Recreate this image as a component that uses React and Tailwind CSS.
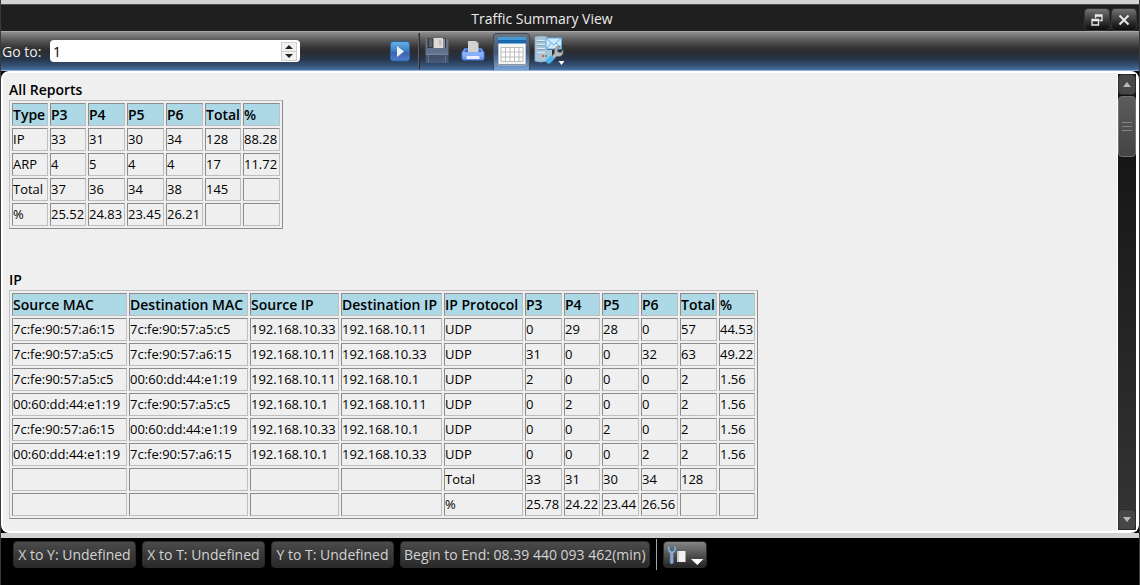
const BORDER = 'border border-t-[#8c8c8c] border-l-[#8c8c8c] border-b-[#bebebe] border-r-[#bebebe]';

const summary = {
  title: 'All Reports',
  widths: ['w-[36px]', 'w-[36px]', 'w-[37px]', 'w-[37px]', 'w-[37px]', 'w-[36px]', 'w-[37px]'],
  head: ['Type', 'P3', 'P4', 'P5', 'P6', 'Total', '%'],
  rows: [
    ['IP', '33', '31', '30', '34', '128', '88.28'],
    ['ARP', '4', '5', '4', '4', '17', '11.72'],
    ['Total', '37', '36', '34', '38', '145', ''],
    ['%', '25.52', '24.83', '23.45', '26.21', '', ''],
  ],
};

const ip = {
  title: 'IP',
  widths: [
    'w-[115px]', 'w-[119px]', 'w-[89px]', 'w-[101px]', 'w-[79px]', 'w-[37px]',
    'w-[36px]', 'w-[37px]', 'w-[37px]', 'w-[37px]', 'w-[36px]',
  ],
  head: ['Source MAC', 'Destination MAC', 'Source IP', 'Destination IP', 'IP Protocol', 'P3', 'P4', 'P5', 'P6', 'Total', '%'],
  rows: [
    ['7c:fe:90:57:a6:15', '7c:fe:90:57:a5:c5', '192.168.10.33', '192.168.10.11', 'UDP', '0', '29', '28', '0', '57', '44.53'],
    ['7c:fe:90:57:a5:c5', '7c:fe:90:57:a6:15', '192.168.10.11', '192.168.10.33', 'UDP', '31', '0', '0', '32', '63', '49.22'],
    ['7c:fe:90:57:a5:c5', '00:60:dd:44:e1:19', '192.168.10.11', '192.168.10.1', 'UDP', '2', '0', '0', '0', '2', '1.56'],
    ['00:60:dd:44:e1:19', '7c:fe:90:57:a5:c5', '192.168.10.1', '192.168.10.11', 'UDP', '0', '2', '0', '0', '2', '1.56'],
    ['7c:fe:90:57:a6:15', '00:60:dd:44:e1:19', '192.168.10.33', '192.168.10.1', 'UDP', '0', '0', '2', '0', '2', '1.56'],
    ['00:60:dd:44:e1:19', '7c:fe:90:57:a6:15', '192.168.10.1', '192.168.10.33', 'UDP', '0', '0', '0', '2', '2', '1.56'],
    ['', '', '', '', 'Total', '33', '31', '30', '34', '128', ''],
    ['', '', '', '', '%', '25.78', '24.22', '23.44', '26.56', '', ''],
  ],
};

function Report({ data }) {
  return (
    <section>
      <h2 className="h-[20px] leading-[20px] font-semibold">{data.title}</h2>
      <table
        aria-label={data.title}
        className="table-fixed w-min border-separate border-spacing-[2px] border border-t-[#bebebe] border-l-[#bebebe] border-b-[#8c8c8c] border-r-[#8c8c8c]"
      >
        <colgroup>
          {data.widths.map((w, i) => <col key={i} className={w} />)}
        </colgroup>
        <thead>
          <tr>
            {data.head.map((h) => (
              <th key={h} scope="col" className={`h-[23px] p-0 text-left leading-[21px] font-semibold whitespace-nowrap bg-[#add8e6] ${BORDER}`}>{h}</th>
            ))}
          </tr>
        </thead>
        <tbody className="text-[13px]">
          {data.rows.map((r, i) => (
            <tr key={i}>
              {r.map((c, j) => (
                <td key={j} className={`h-[23px] p-0 leading-[21px] whitespace-nowrap ${BORDER}`}>{c}</td>
              ))}
            </tr>
          ))}
        </tbody>
      </table>
    </section>
  );
}

function PlayIcon() {
  return (
    <svg width="20" height="21" viewBox="0 0 20 21">
      <defs>
        <linearGradient id="play" x1="0" y1="0" x2="0" y2="1">
          <stop offset="0" stopColor="#67b3e4" /><stop offset=".5" stopColor="#3d7cc4" /><stop offset=".55" stopColor="#3a62b0" /><stop offset="1" stopColor="#4f7fc9" />
        </linearGradient>
      </defs>
      <rect x=".5" y=".5" width="19" height="19.500" rx="2.500" fill="url(#play)" stroke="#315f9f" />
      <path d="M7 5 L14 10.500 L7 16z" fill="#eef0f6" />
    </svg>
  );
}

function SaveIcon() {
  return (
    <svg width="24" height="26" viewBox="0 0 24 26">
      <defs>
        <linearGradient id="disk" x1="0" y1="0" x2="0" y2="1">
          <stop offset="0" stopColor="#68768d" /><stop offset=".5" stopColor="#5d6f8c" /><stop offset=".62" stopColor="#66778f" /><stop offset=".68" stopColor="#3f4e68" /><stop offset="1" stopColor="#4a5b78" />
        </linearGradient>
      </defs>
      <path d="M.500 1h22l1 1v22q0 1-1 1H1.500q-1 0-1-1z" fill="url(#disk)" />
      <path d="M2.500 .500h18.500v9.500H2.500z" fill="#35383d" />
      <path d="M4 1h3.500v8H4z" fill="#5b5e63" />
      <path d="M8.500 0h9.500v10h-9.500z" fill="#dedbd8" />
      <path d="M14 1.500h2.500v6H14z" fill="#c4c1bf" />
      <path d="M18 1h2v9h-2z" fill="#8e9094" />
      <path d="M3.500 17v8M20.500 17v8" stroke="#66778f" strokeWidth=".8" />
      <path d="M1 16.500h22" stroke="#7c8ca3" strokeWidth=".8" />
    </svg>
  );
}

function PrintIcon() {
  return (
    <svg width="24" height="20" viewBox="0 0 24 20">
      <defs>
        <linearGradient id="printer" x1="0" y1="0" x2="0" y2="1">
          <stop offset="0" stopColor="#6d9cf4" /><stop offset=".5" stopColor="#8eb5fd" /><stop offset="1" stopColor="#5c8af0" />
        </linearGradient>
      </defs>
      <path d="M4 7.500h16q1 0 1.500 2 1.500.500 1.500 2.500v5q0 2-2 2H3q-2 0-2-2v-5q0-2 1.500-2.500.5-2 1.500-2z" fill="url(#printer)" stroke="#5c88e6" strokeWidth=".8" />
      <path d="M4.500 8.500h15l1 2.500h-17z" fill="#3c64ba" />
      <path d="M7 0h8l2.500 2v9H7z" fill="#d2d2d0" />
      <path d="M15 0v2h2.500z" fill="#a2a4a6" />
      <path d="M5.500 15h13v3h-13z" fill="#e8effd" />
    </svg>
  );
}

function TableIcon() {
  return (
    <svg width="28" height="29" viewBox="0 0 28 29">
      <rect x=".5" y=".5" width="27" height="27.500" rx="1" fill="#f4f5f6" stroke="#b8c4d2" />
      <path d="M0 .500h28v6H0z" fill="#1766b0" />
      <path d="M0 .500h28v2.500H0z" fill="#3f9ad8" />
      <path d="M3 10.500h22v14H3z" fill="#fff" stroke="#bcbcbc" />
      <path d="M7.500 10v15M12 10v15M16.500 10v15M21 10v15M3 15h22M3 20h22" stroke="#bcbcbc" />
      <path d="M1 27.500h26" stroke="#8b96a3" />
    </svg>
  );
}

function ReportToolsIcon() {
  return (
    <svg width="32" height="31" viewBox="0 0 32 31">
      <path d="M1 1q6-2 12 0v24q-6 2-12 0z" fill="#a9c5d9" stroke="#8fb0c8" strokeWidth=".8" />
      <path d="M3 4.500h8M3 8.500h8M3 12.500h8M3 16.500h8" stroke="#dcebf4" />
      <path d="M3 5.500h8M3 9.500h8M3 13.500h8" stroke="#7896ad" strokeWidth=".7" />
      <path d="M13 14h5v11l-5 1z" fill="#a9c5d9" />
      <path d="M8 19h2v2H8z" fill="#e0593e" />
      <path d="M11 19h2v2h-2z" fill="#55a861" />
      <path d="M12 2h15.500v11H12z" fill="#cfe9f8" stroke="#62aee0" />
      <path d="M12 2l7.700 7L27.500 2M12 13l5.500-6M27.500 13L22 7" fill="none" stroke="#69b0de" />
      <path d="M17.500 20.500l3-3.500q-1-4.500 3-6.500l3-.5-3 3.500.5 2.500 3 .5 2-3q1 5.500-3 7h-3.500l-2.500 2.500z" fill="#b4b8bc" stroke="#5e6265" strokeWidth=".7" />
      <path d="M13 24.500l4-4 2.500 2-4 4q-2.500.5-2.500-2z" fill="#4fb3ec" stroke="#4fb3ec" strokeWidth="2" strokeLinejoin="round" />
      <path d="M24.500 25h6l-3 4z" fill="#fff" />
    </svg>
  );
}

function WrenchMenuIcon() {
  return (
    <svg width="38" height="24" viewBox="0 0 38 24">
      <rect x="11" y="8" width="8.500" height="11" fill="#f2f2f2" />
      <path d="M11 8h2v11h-2z" fill="#c8c8c8" />
      <path d="M1.500 3q-1 5 2.500 7.500V20q1.700 2 3.500 0V10.500Q11.500 8 10 3L8 2.500v4.500L6 8.200 4 7V2.500z" fill="#8eabcd" stroke="#4e6684" strokeWidth=".7" />
      <path d="M25 16h12.500l-6.250 6z" fill="#fff" />
    </svg>
  );
}

const windowButton =
  'flex h-[23px] w-[26px] items-center justify-center rounded border border-[#333] bg-linear-to-b from-[#747474] via-[#3c3c3c] to-[#0b0b0b]';
const statusButton =
  'h-[27px] min-w-[123px] rounded border border-[#2b2b2b] bg-linear-to-b from-[#4b4b4b] to-[#292929] px-[3px] whitespace-nowrap text-[#d2d2d2]';

export default function App() {
  return (
    <div className="flex min-h-screen flex-col bg-black border-x border-[#3a3a3a] font-['Open_Sans','Noto_Sans',sans-serif] text-[14px] text-black">
      <div className="h-[5px] shrink-0 border-b border-[#505050] bg-[#d2d2d2]" />

      <header className="flex h-[26px] shrink-0 items-end gap-px bg-[#1f1f1f] pr-[2px]">
        <h1 className="h-[26px] flex-1 text-center leading-[27px] text-[#ececec]">Traffic Summary View</h1>
        <button type="button" aria-label="Restore" className={windowButton}>
          <svg width="12" height="12" viewBox="0 0 12 12" fill="none" stroke="#e8e8e8">
            <path d="M4.500 4V1h6.500v5.500H8.500M4.500 2h6.500" strokeWidth="1.300" />
            <path d="M1 5.500h6.500V11H1zM1 6.500h6.500" strokeWidth="1.300" />
          </svg>
        </button>
        <button type="button" aria-label="Close" className={windowButton}>
          <svg width="12" height="12" viewBox="0 0 12 12" stroke="#e8e8e8" strokeWidth="2"><path d="M1.500 1.500l9 9M10.500 1.500l-9 9" /></svg>
        </button>
      </header>

      <div className="flex h-[40px] shrink-0 items-center border-t border-b border-t-[#a8a8a8] border-b-[#8fb0da] bg-[linear-gradient(to_bottom,#8f8f8f_0%,#5c5c5c_20%,#3a3a3a_38%,#2b2c2e_50%,#26364c_72%,#38557c_90%,#4a70a3_100%)] pl-px">
        <label htmlFor="goto" className="w-[48px] whitespace-nowrap text-[#ededed]">Go to:</label>
        <div className="flex h-[22px] w-[250px] items-center rounded-sm bg-white pr-[3px]">
          <input id="goto" type="text" inputMode="numeric" defaultValue="1" className="h-full min-w-0 flex-1 bg-transparent pl-[3px] outline-none" />
          <div className="flex h-[19px] w-[16px] flex-col border border-[#cfcfcf] bg-[#f2f2f2]">
            <button type="button" aria-label="Increase" className="flex flex-1 items-center justify-center border-b border-[#cfcfcf]">
              <svg width="8" height="4" viewBox="0 0 8 4"><path d="M0 4l4-4 4 4z" fill="#222" /></svg>
            </button>
            <button type="button" aria-label="Decrease" className="flex flex-1 items-center justify-center">
              <svg width="8" height="4" viewBox="0 0 8 4"><path d="M0 0l4 4 4-4z" fill="#222" /></svg>
            </button>
          </div>
        </div>
        <button type="button" aria-label="Go" className="ml-[90px]"><PlayIcon /></button>
        <div className="ml-[8px] h-[36px] w-[2px] border-l border-[#5f5f5f] bg-[#25282c]" />
        <button type="button" aria-label="Save" className="ml-[5px]"><SaveIcon /></button>
        <button type="button" aria-label="Print" className="ml-[12px]"><PrintIcon /></button>
        <button type="button" aria-label="Table view" aria-pressed="true" className="ml-[8px] flex h-[37px] w-[37px] items-center justify-center rounded-t border border-b-0 border-[#45484c] bg-linear-to-b from-[#6b7582] via-[#3f5878] to-[#7ba2d6]">
          <TableIcon />
        </button>
        <button type="button" aria-label="Report settings" className="ml-[4px]"><ReportToolsIcon /></button>
      </div>

      <main className="flex flex-1 rounded-lg border-2 border-white bg-[#efefef]">
        <div className="flex min-w-0 flex-1 flex-col gap-[41px] overflow-hidden pt-[7px] pb-[12px] pl-[6px]">
          <Report data={summary} />
          <Report data={ip} />
        </div>
        <div className="flex w-[20px] shrink-0 flex-col border border-white bg-linear-to-b from-[#101010] to-[#353535]">
          <button type="button" aria-label="Scroll up" className="flex h-[21px] items-center justify-center rounded-sm border border-[#2c2c2c] bg-[#474747]">
            <svg width="8" height="5" viewBox="0 0 8 5"><path d="M0 5l4-5 4 5z" fill="#b9b9b9" /></svg>
          </button>
          <div className="mt-px flex h-[61px] flex-col items-center justify-center gap-[3px] rounded border border-[#707070] bg-linear-to-b from-[#5c5c5c] to-[#444]">
            <span className="h-px w-[10px] bg-[#858585]" />
            <span className="h-px w-[10px] bg-[#858585]" />
            <span className="h-px w-[10px] bg-[#858585]" />
          </div>
          <button type="button" aria-label="Scroll down" className="mt-auto flex h-[21px] items-center justify-center rounded-sm border border-[#2c2c2c] bg-[#474747]">
            <svg width="8" height="5" viewBox="0 0 8 5"><path d="M0 0l4 5 4-5z" fill="#b9b9b9" /></svg>
          </button>
        </div>
      </main>

      <footer className="shrink-0 rounded-b-lg border-t-[5px] border-[#d2d2d2] bg-black pb-[15px]">
        <div className="flex items-center gap-[6px] pt-px pl-[12px]">
          <button type="button" className={statusButton}>X to Y: Undefined</button>
          <button type="button" className={statusButton}>X to T: Undefined</button>
          <button type="button" className={statusButton}>Y to T: Undefined</button>
          <button type="button" className={statusButton}>Begin to End: 08.39 440 093 462(min)</button>
          <div className="h-[31px] w-px bg-[#a5a5a5]" />
          <button type="button" aria-label="Tools" className="flex h-[27px] items-center justify-center rounded border border-[#2b2b2b] bg-linear-to-b from-[#858585] to-[#252525] px-[2px]">
            <WrenchMenuIcon />
          </button>
        </div>
      </footer>
    </div>
  );
}
